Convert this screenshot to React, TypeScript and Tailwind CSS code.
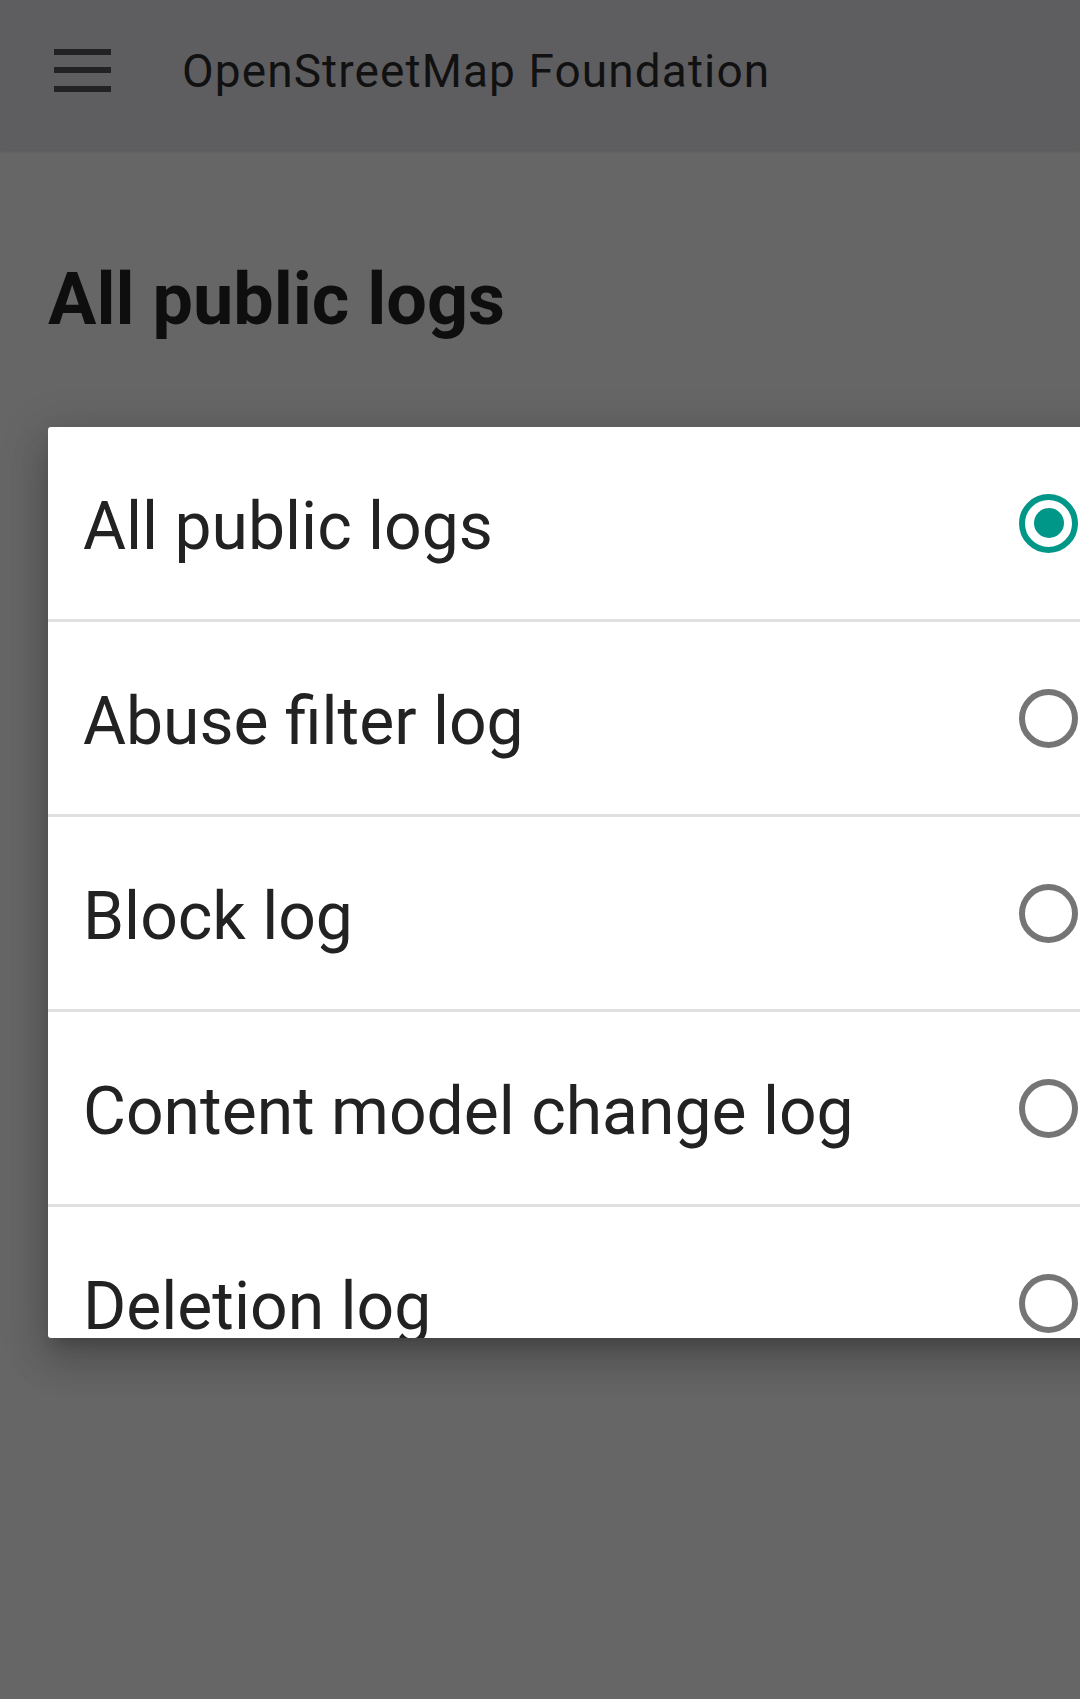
import { useState } from "react";

const logs = [
  "All public logs",
  "Abuse filter log",
  "Block log",
  "Content model change log",
  "Deletion log",
  "Import log",
];

function Radio({ checked }: { checked: boolean }) {
  return (
    <span
      className={`flex h-[59px] w-[59px] shrink-0 items-center justify-center rounded-full border-[6px] ${
        checked ? "border-[#009688]" : "border-[#757575]"
      }`}
    >
      {checked && <span className="h-[30px] w-[30px] rounded-full bg-[#009688]" />}
    </span>
  );
}

export default function App() {
  const [selected, setSelected] = useState(0);

  return (
    <div className="relative min-h-[1699px] w-full overflow-hidden bg-[#666666] font-['Roboto',_'Noto_Sans',_sans-serif]">
      {/* Top bar, dimmed by the dialog overlay */}
      <header className="flex h-[150px] items-center bg-[#5e5e60] pl-[54px] shadow-[0_1px_3px_rgba(0,0,0,0.15)]">
        <div className="flex w-[57px] flex-col gap-[12.5px] pb-[10px]">
          <span className="h-[6px] w-full bg-[#222225]" />
          <span className="h-[6px] w-full bg-[#222225]" />
          <span className="h-[6px] w-full bg-[#222225]" />
        </div>
        <span className="ml-[71px] pb-[8px] text-[46px] leading-none tracking-[1.1px] text-[#111112]">
          OpenStreetMap Foundation
        </span>
      </header>

      <h1 className="mt-[114px] pl-[48px] text-[72px] font-bold leading-none text-[#0e0e0e]">
        All public logs
      </h1>

      {/* Select dialog */}
      <div className="ml-[48px] mt-[91px] h-[911px] w-[1100px] overflow-hidden rounded-[3px] bg-white shadow-[0_11px_15px_-7px_rgba(0,0,0,0.2),0_24px_38px_3px_rgba(0,0,0,0.14),0_9px_46px_8px_rgba(0,0,0,0.12)]">
        {logs.map((label, i) => (
          <button
            key={label}
            onClick={() => setSelected(i)}
            className={`flex h-[195px] w-full items-center pl-[35px] text-left ${
              i < logs.length - 1 ? "border-b-[3px] border-[#e0e0e0]" : ""
            }`}
          >
            <span className="w-[936px] pt-[8px] text-[66px] leading-none text-[#222222]">{label}</span>
            <Radio checked={selected === i} />
          </button>
        ))}
      </div>
    </div>
  );
}
